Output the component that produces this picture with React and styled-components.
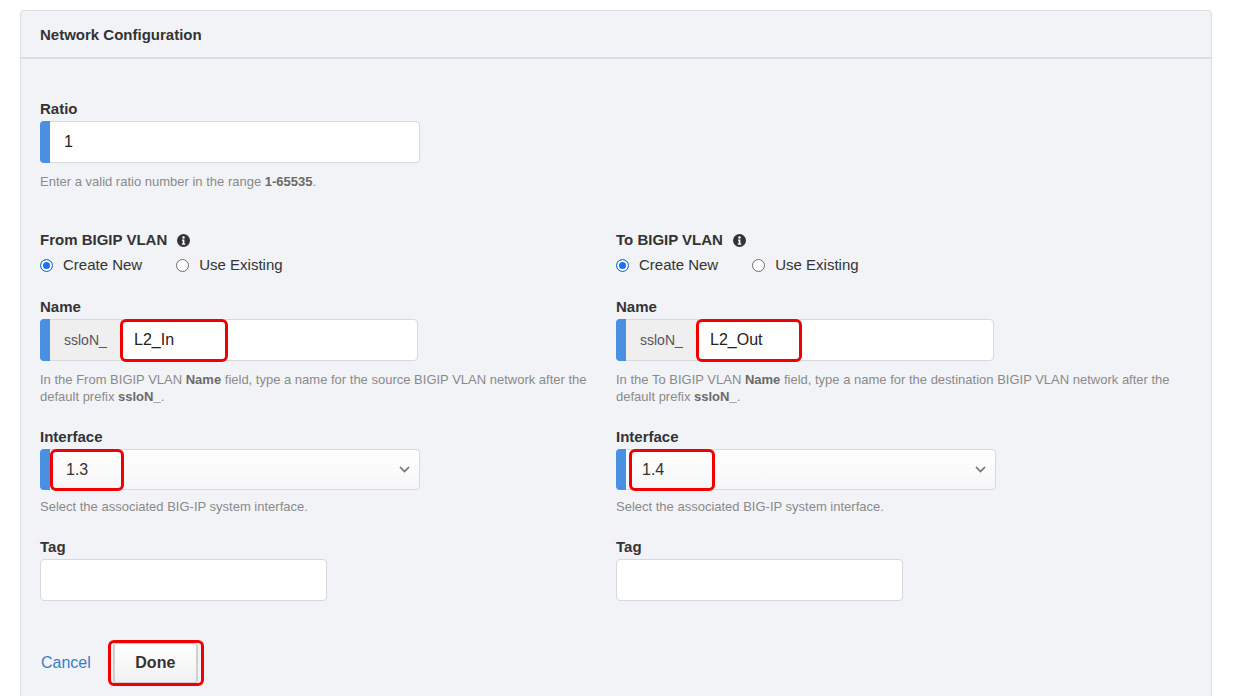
import React from 'react';
import styled, { createGlobalStyle } from 'styled-components';

const colors = {
    panel: '#f2f3f7',
    border: '#dcdde2',
    inputBorder: '#d8d9de',
    text: '#333333',
    help: '#8a8a8a',
    accent: '#4a90e2',
    link: '#3b7dc4',
    mark: '#f00000',
};

const GlobalStyle = createGlobalStyle`
    html, body {
        margin: 0;
        padding: 0;
        background: #ffffff;
        font-family: "Liberation Sans", Arial, "Helvetica Neue", sans-serif;
        color: ${colors.text};
    }
`;

const InfoIcon = () => (
    <svg width="13" height="13" viewBox="0 0 16 16" aria-hidden="true">
        <circle cx="8" cy="8" r="8" fill="#333" />
        <circle cx="8" cy="4.3" r="1.5" fill="#fff" />
        <path d="M6.2 6.8h2.9v5h1.1v1.5H5.9v-1.5h1.1V8.3h-0.8z" fill="#fff" />
    </svg>
);

const Chevron = () => (
    <svg width="11" height="7" viewBox="0 0 11 7" aria-hidden="true">
        <path d="M1 1l4.5 4.5L10 1" fill="none" stroke="#6f6f73" strokeWidth="1.6" />
    </svg>
);

const Radio = ({ checked, children }) => (
    <StyledRadioOption>
        <StyledRadioDot checked={checked} />
        {children}
    </StyledRadioOption>
);

const VlanColumn = ({ title, suffix, markWidth, iface, ifaceMark, nameHelp, kind }) => (
    <StyledColumn>
        <div>
            <StyledLabel>
                {title}
                <InfoIcon />
            </StyledLabel>
            <StyledRadioRow>
                <Radio checked>Create New</Radio>
                <Radio>Use Existing</Radio>
            </StyledRadioRow>
        </div>

        <div>
            <StyledLabel>Name</StyledLabel>
            <StyledInput width={378}>
                <StyledAccent />
                <StyledPrefix>ssloN_</StyledPrefix>
                <StyledValue>
                    <StyledMark style={{ width: markWidth }} left={-2} top={-1} height={43} />
                    {suffix}
                </StyledValue>
            </StyledInput>
            <StyledHelp>
                In the {nameHelp} BIGIP VLAN <b>Name</b> field, type a name for the {kind} BIGIP VLAN network after the default prefix <b>ssloN_</b>.
            </StyledHelp>
        </div>

        <div>
            <StyledLabel>Interface</StyledLabel>
            <StyledSelect>
                <StyledAccent />
                <StyledSelectValue>
                    <StyledMark style={{ width: ifaceMark.width }} left={ifaceMark.left} top={-1} height={42} />
                    {iface}
                </StyledSelectValue>
                <Chevron />
            </StyledSelect>
            <StyledHelp tight>Select the associated BIG-IP system interface.</StyledHelp>
        </div>

        <div>
            <StyledLabel>Tag</StyledLabel>
            <StyledInput width={287} />
        </div>
    </StyledColumn>
);

const App = () => {
    return (
        <StyledPage>
            <GlobalStyle />
            <StyledPanel>
                <StyledHeader>Network Configuration</StyledHeader>
                <StyledBody>
                    <div>
                        <StyledLabel>Ratio</StyledLabel>
                        <StyledInput width={380}>
                            <StyledAccent />
                            <StyledValue pad={14}>1</StyledValue>
                        </StyledInput>
                        <StyledHelp>Enter a valid ratio number in the range <b>1-65535</b>.</StyledHelp>
                    </div>

                    <StyledColumns>
                        <VlanColumn
                            title="From BIGIP VLAN"
                            nameHelp="From"
                            kind="source"
                            suffix="L2_In"
                            markWidth={108}
                            iface="1.3"
                            ifaceMark={{ left: 0, width: 74 }}
                        />
                        <VlanColumn
                            title="To BIGIP VLAN"
                            nameHelp="To"
                            kind="destination"
                            suffix="L2_Out"
                            markWidth={106}
                            iface="1.4"
                            ifaceMark={{ left: 3, width: 86 }}
                        />
                    </StyledColumns>

                    <StyledFooter>
                        <StyledLink>Cancel</StyledLink>
                        <StyledButton>
                            <StyledMark left={-7} top={-4} height={46} style={{ width: 96 }} />
                            Done
                        </StyledButton>
                    </StyledFooter>
                </StyledBody>
            </StyledPanel>
        </StyledPage>
    );
}

const StyledPage = styled.div`
    height: 696px;
    overflow: hidden;
    padding: 10px 22px 0 20px;
    box-sizing: border-box;
`;

const StyledPanel = styled.div`
    background: ${colors.panel};
    border: 1px solid ${colors.border};
    border-radius: 4px;
    min-height: 720px;
`;

const StyledHeader = styled.div`
    height: 46px;
    display: flex;
    align-items: center;
    padding: 0 19px;
    font-size: 15px;
    font-weight: bold;
    color: ${colors.text};
    border-bottom: 2px solid ${colors.border};
`;

const StyledBody = styled.div`
    padding: 40px 19px 20px;
`;

const StyledLabel = styled.div`
    display: flex;
    align-items: center;
    gap: 10px;
    font-size: 15px;
    font-weight: bold;
    line-height: 20px;
    margin-bottom: 2px;
    color: ${colors.text};
`;

const StyledInput = styled.div`
    position: relative;
    display: flex;
    width: ${p => p.width}px;
    height: 42px;
    box-sizing: border-box;
    background: #fff;
    border: 1px solid ${colors.inputBorder};
    border-radius: 4px;
`;

const StyledAccent = styled.div`
    width: 10px;
    margin: -1px 0 -1px -1px;
    background: ${colors.accent};
    border-radius: 4px 0 0 4px;
    flex-shrink: 0;
    align-self: stretch;
`;

const StyledPrefix = styled.div`
    display: flex;
    align-items: center;
    width: 72px;
    padding-left: 14px;
    box-sizing: border-box;
    background: #efefef;
    border-right: 1px solid #e2e2e2;
    font-size: 14px;
    color: #555;
`;

const StyledValue = styled.div`
    position: relative;
    display: flex;
    align-items: center;
    flex: 1;
    padding-left: ${p => p.pad ?? 12}px;
    font-size: 16px;
    color: #222;
`;

const StyledSelect = styled.div`
    position: relative;
    display: flex;
    align-items: center;
    width: 380px;
    height: 41px;
    box-sizing: border-box;
    padding-right: 9px;
    border: 1px solid ${colors.inputBorder};
    border-radius: 4px;
    background: linear-gradient(#ffffff, #f6f6f8);
`;

const StyledSelectValue = styled.div`
    position: relative;
    display: flex;
    align-items: center;
    align-self: stretch;
    flex: 1;
    padding-left: 16px;
    font-size: 16px;
    color: #333;
`;

const StyledMark = styled.span`
    position: absolute;
    left: ${p => p.left}px;
    top: ${p => p.top}px;
    height: ${p => p.height}px;
    box-sizing: border-box;
    border: 3px solid ${colors.mark};
    border-radius: 6px;
    pointer-events: none;
`;

const StyledHelp = styled.div`
    margin-top: ${p => (p.tight ? 8 : 10)}px;
    font-size: 13px;
    line-height: 17px;
    color: ${colors.help};

    b {
        color: #6a6a6a;
    }
`;

const StyledColumns = styled.div`
    display: grid;
    grid-template-columns: 576px 1fr;
    margin-top: 40px;
`;

const StyledColumn = styled.div`
    display: flex;
    flex-direction: column;
    gap: 22px;
    padding-right: 20px;
`;

const StyledRadioRow = styled.div`
    display: flex;
    gap: 34px;
    margin-top: 5px;
`;

const StyledRadioOption = styled.label`
    display: flex;
    align-items: center;
    gap: 10px;
    font-size: 15px;
    line-height: 20px;
    color: #333;
`;

const StyledRadioDot = styled.span`
    width: 13px;
    height: 13px;
    box-sizing: border-box;
    border-radius: 50%;
    border: 1px solid ${p => (p.checked ? '#1a73e8' : '#6f6f6f')};
    background: ${p => (p.checked ? '#1a73e8' : '#fff')};
    box-shadow: ${p => (p.checked ? 'inset 0 0 0 2px #fff' : 'none')};
`;

const StyledFooter = styled.div`
    display: flex;
    align-items: center;
    gap: 22px;
    margin-top: 42px;
    padding-left: 1px;
`;

const StyledLink = styled.a`
    font-size: 16px;
    color: ${colors.link};
    cursor: pointer;
`;

const StyledButton = styled.button`
    position: relative;
    width: 85px;
    height: 40px;
    font-family: inherit;
    font-size: 16px;
    font-weight: bold;
    color: #333;
    background: linear-gradient(#ffffff, #f1f1f3);
    border: 1px solid #cfd0d4;
    border-left-width: 2px;
    border-right-width: 2px;
    border-radius: 3px;
`;

export default App;
